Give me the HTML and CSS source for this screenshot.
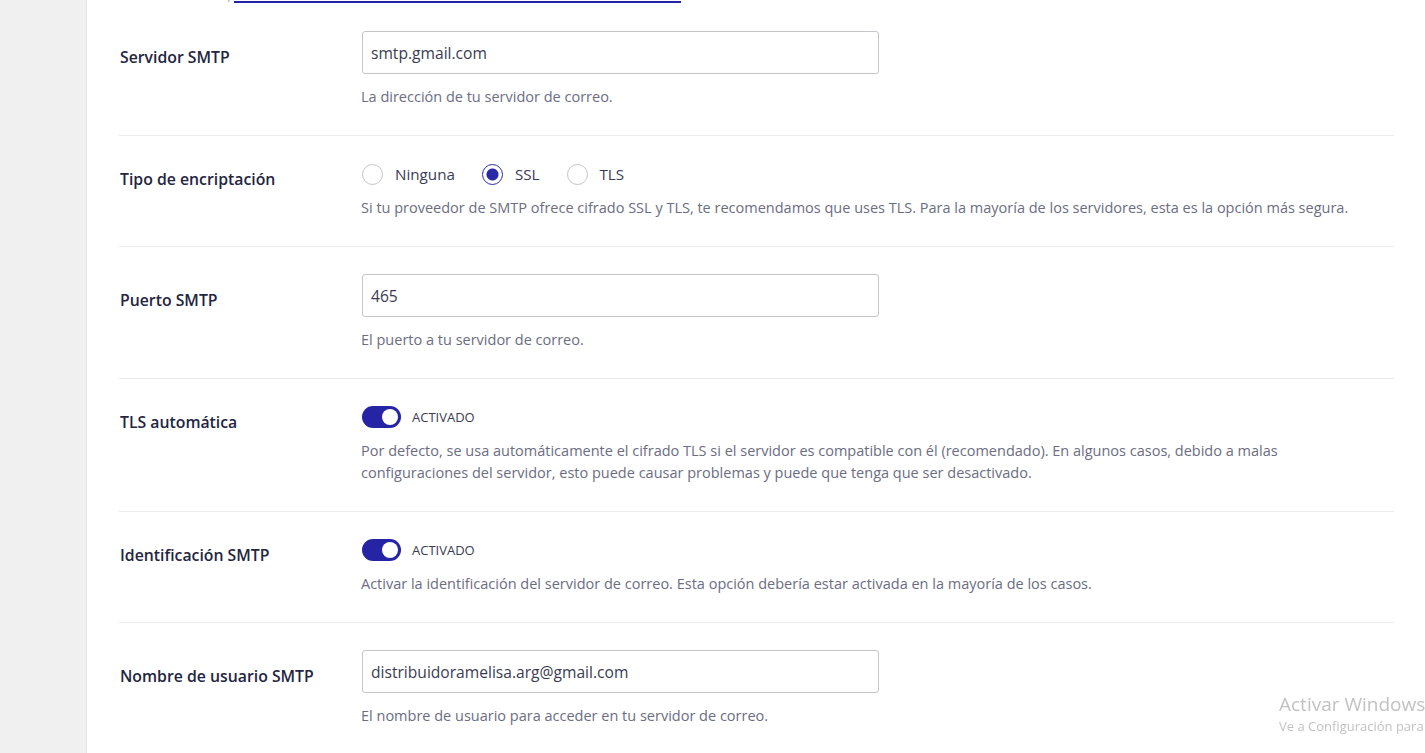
FILE: index.html
```html
<!DOCTYPE html>
<html lang="es">
<head>
	<meta charset="UTF-8">
	<title>Ajustes SMTP</title>
	<link rel="stylesheet" href="styles.css">
</head>
<body>
	<div class="wrap">
		<div class="sidebar"></div>
		<div class="panel">
			<p class="prev-desc"><span class="sep">|</span><a href="#">Cómo configurar el correo de Gmail con tu servidor SMTP</a></p>

			<div class="row row-input first">
				<div class="label">Servidor SMTP</div>
				<div class="field">
					<input class="text" type="text" value="smtp.gmail.com">
					<p class="desc">La dirección de tu servidor de correo.</p>
				</div>
			</div>

			<div class="row">
				<div class="label">Tipo de encriptación</div>
				<div class="field">
					<div class="radios">
						<label class="radio"><span class="dot"></span>Ninguna</label>
						<label class="radio checked"><span class="dot"></span>SSL</label>
						<label class="radio"><span class="dot"></span>TLS</label>
					</div>
					<p class="desc">Si tu proveedor de SMTP ofrece cifrado SSL y TLS, te recomendamos que uses TLS. Para la mayoría de los servidores, esta es la opción más segura.</p>
				</div>
			</div>

			<div class="row row-input">
				<div class="label">Puerto SMTP</div>
				<div class="field">
					<input class="text" type="text" value="465">
					<p class="desc">El puerto a tu servidor de correo.</p>
				</div>
			</div>

			<div class="row">
				<div class="label">TLS automática</div>
				<div class="field">
					<div class="switch-line"><span class="switch"></span><span class="switch-text">ACTIVADO</span></div>
					<p class="desc">Por defecto, se usa automáticamente el cifrado TLS si el servidor es compatible con él (recomendado). En algunos casos, debido a malas<br>configuraciones del servidor, esto puede causar problemas y puede que tenga que ser desactivado.</p>
				</div>
			</div>

			<div class="row">
				<div class="label">Identificación SMTP</div>
				<div class="field">
					<div class="switch-line"><span class="switch"></span><span class="switch-text">ACTIVADO</span></div>
					<p class="desc">Activar la identificación del servidor de correo. Esta opción debería estar activada en la mayoría de los casos.</p>
				</div>
			</div>

			<div class="row row-input last">
				<div class="label">Nombre de usuario SMTP</div>
				<div class="field">
					<input class="text" type="text" value="distribuidoramelisa.arg@gmail.com">
					<p class="desc">El nombre de usuario para acceder en tu servidor de correo.</p>
				</div>
			</div>
		</div>
	</div>
	<div class="watermark">
		<div class="wm-title">Activar Windows</div>
		<div class="wm-sub">Ve a Configuración para activar Windows.</div>
	</div>
</body>
</html>
```
FILE: styles.css
```css
*{margin: 0;padding: 0;box-sizing: border-box;}
html,body{height: 100%;overflow: hidden;}
body{
	font-family: "Open Sans", Lato, sans-serif;
	background: #f0f0f1;
	color: #2b2c44;
}
.wrap{
	display: flex;
	min-height: 100%;
}
.sidebar{
	width: 87px;
	flex: none;
	border-right: 1px solid #e3e3e6;
}
.panel{
	flex: 1;
	background: #fff;
	padding: 0 31px 0 32px;
}
.prev-desc{
	display: flex;
	align-items: flex-end;
	margin-top: -19px;
	height: 22px;
	line-height: 20px;
	font-size: 14px;
	color: #9a9aa8;
	padding-left: 106px;
	white-space: nowrap;
}
.prev-desc .sep{
	margin-right: 1px;
}
.prev-desc a{
	display: block;
	width: 447px;
	line-height: 20px;
	color: #2a2ab0;
	text-decoration: none;
	border-bottom: 2px solid #2222aa;
	overflow: hidden;
}
.row{
	display: flex;
	padding: 27px 0;
	border-bottom: 1px solid #ebebef;
}
.row.first{
	padding-top: 28px;
}
.row.last{
	border-bottom: none;
}
.label{
	width: 242px;
	flex: none;
	padding-left: 1px;
	font-size: 15.8px;
	font-weight: 600;
	line-height: 22px;
	padding-top: 5px;
	color: #24253f;
}
.row-input .label{
	padding-top: 15px;
}
.field{
	flex: 1;
}
.text{
	display: block;
	width: 517px;
	height: 43px;
	margin-left: 1px;
	border: 1px solid #c4c4ca;
	border-radius: 3px;
	padding: 0 8px;
	font-family: inherit;
	font-size: 15.6px;
	color: #3a3b52;
	background: #fff;
}
.desc{
	margin-top: 12px;
	font-size: 14.5px;
	line-height: 22px;
	color: #6b6d82;
}
.radios{
	display: flex;
	height: 22px;
	align-items: center;
	gap: 27px;
	padding-left: 1px;
}
.radio{
	display: flex;
	align-items: center;
	gap: 12px;
	font-size: 15.2px;
	color: #3a3b55;
}
.dot{
	width: 21px;
	height: 21px;
	border: 1px solid #c4c4ca;
	border-radius: 50%;
	background: #fff;
}
.radio.checked .dot{
	border-color: #2a2aa8;
	background: radial-gradient(circle, #2a2aa8 0 5.5px, #fff 6.5px);
}
.switch-line{
	display: flex;
	align-items: center;
	height: 22px;
	gap: 11px;
	padding-left: 1px;
}
.switch{
	position: relative;
	width: 39px;
	height: 22px;
	border-radius: 11px;
	background: #2424a4;
}
.switch:after{
	content: "";
	position: absolute;
	top: 3px;
	right: 3px;
	width: 16px;
	height: 16px;
	border-radius: 50%;
	background: #fff;
}
.switch-text{
	font-size: 13px;
	color: #3a3b52;
}
.watermark{
	position: fixed;
	left: 1279px;
	top: 692px;
	white-space: nowrap;
	color: #c2c2c2;
	font-family: "Open Sans", sans-serif;
}
.wm-title{
	font-size: 19px;
	line-height: 24px;
}
.wm-sub{
	font-size: 13px;
	line-height: 18px;
	margin-top: 1px;
}
```
